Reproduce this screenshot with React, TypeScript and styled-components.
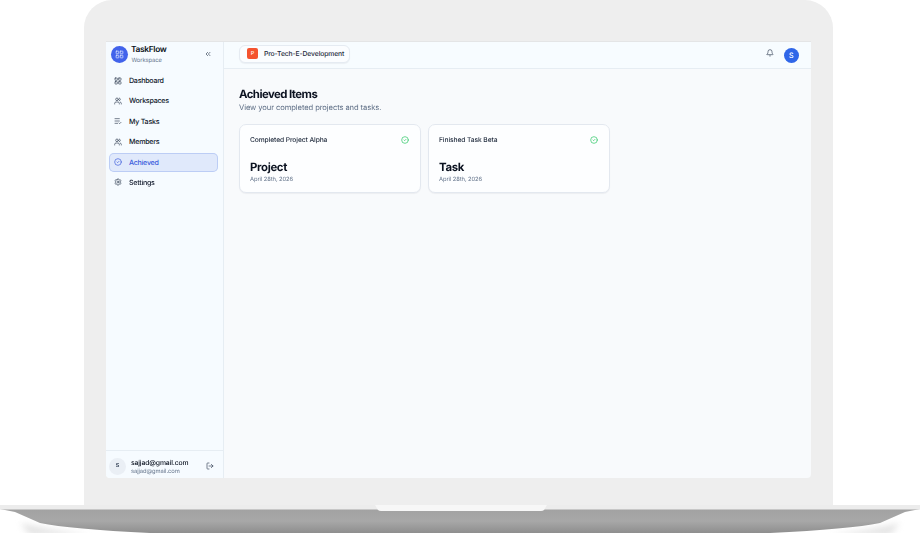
import React from "react";
import styled, { createGlobalStyle } from "styled-components";
import {
  Bell,
  ChevronsLeft,
  CircleCheck,
  LayoutGrid,
  ListCheck,
  LogOut,
  Settings,
  Users,
} from "lucide-react";

const GlobalStyle = createGlobalStyle`
  html, body {
    margin: 0;
    background: #fff;
    font-family: Inter, "Liberation Sans", sans-serif;
    color: #0b1220;
    text-rendering: geometricPrecision;
  }
  * { box-sizing: border-box; }
`;

const Page = styled.div`
  width: 920px;
  height: 533px;
  overflow: hidden;
  display: flex;
  flex-direction: column;
`;

const Lid = styled.div`
  width: 749px;
  height: 505px;
  flex: none;
  margin-left: 84px;
  padding: 41px 22px 27px;
  background: #eeeeee;
  border-radius: 28px 28px 0 0;
`;

const Screen = styled.div`
  height: 437px;
  display: grid;
  grid-template-columns: 118px 1fr;
  background: #f8fafc;
  border-top: 1px solid #e4e5e6;
  border-radius: 0 0 4px 4px;
  overflow: hidden;
  filter: blur(0.2px);
`;

const Sidebar = styled.aside`
  display: flex;
  flex-direction: column;
  background: #f6fbff;
  border-right: 1px solid #e6edf3;
`;

const Brand = styled.div`
  height: 27px;
  flex: none;
  display: flex;
  align-items: center;
  gap: 3.5px;
  padding: 0 11px 3px 4.5px;
`;

const BrandLogo = styled.div`
  width: 17px;
  height: 17px;
  flex: none;
  border-radius: 50%;
  background: #4263eb;
  color: #dbe4ff;
  display: flex;
  align-items: center;
  justify-content: center;
`;

const BrandText = styled.div`
  flex: 1;
  display: flex;
  flex-direction: column;
  gap: 2px;
`;

const BrandName = styled.div`
  font-size: 8.4px;
  line-height: 10px;
  font-weight: 600;
  letter-spacing: -0.33px;
`;

const BrandSub = styled.div`
  font-size: 5.8px;
  line-height: 7px;
  padding-left: 0.5px;
  letter-spacing: -0.08px;
  color: #64748b;
`;

const Nav = styled.nav`
  flex: 1;
  display: flex;
  flex-direction: column;
  gap: 1.4px;
  padding: 2px 5px 0 3px;
`;

const NavItem = styled.div<{ $active?: boolean }>`
  height: 19px;
  display: flex;
  align-items: center;
  gap: 7px;
  padding-left: 5px;
  font-size: 7.1px;
  font-weight: 500;
  letter-spacing: -0.25px;
  border-radius: 5px;
  color: ${(p) => (p.$active ? "#3b5bdb" : "#0f172a")};
  background: ${(p) => (p.$active ? "#e0e9fb" : "transparent")};
  box-shadow: ${(p) => (p.$active ? "inset 0 0 0 1px #bccdf5" : "none")};
`;

const Footer = styled.div`
  height: 28px;
  flex: none;
  display: flex;
  align-items: center;
  gap: 5px;
  padding: 3px 9px 0 3px;
  border-top: 1px solid #e6edf3;
`;

const FooterAvatar = styled.div`
  width: 17px;
  height: 17px;
  flex: none;
  border-radius: 50%;
  background: #eaeff5;
  display: flex;
  align-items: center;
  justify-content: center;
  font-size: 5.5px;
  font-weight: 600;
  color: #334155;
`;

const FooterText = styled.div`
  flex: 1;
  margin-top: 2px;
  display: flex;
  flex-direction: column;
  gap: 1px;
`;

const FooterName = styled.div`
  font-size: 6.8px;
  line-height: 8px;
  font-weight: 500;
  letter-spacing: -0.12px;
`;

const FooterMail = styled.div`
  font-size: 5.8px;
  line-height: 7px;
  letter-spacing: -0.07px;
  color: #64748b;
`;

const Main = styled.main`
  display: flex;
  flex-direction: column;
  min-width: 0;
`;

const Header = styled.header`
  height: 27px;
  flex: none;
  display: flex;
  align-items: center;
  justify-content: space-between;
  padding: 0 12px 3px 15px;
  background: #f7fcff;
  border-bottom: 1px solid #e6edf3;
`;

const ProjectChip = styled.div`
  width: 111px;
  height: 18px;
  display: flex;
  align-items: center;
  gap: 6px;
  padding-left: 7px;
  white-space: nowrap;
  font-size: 6.8px;
  font-weight: 500;
  letter-spacing: -0.12px;
  color: #1e293b;
  background: #fbfdff;
  border: 1px solid #e5ebf2;
  border-radius: 6px;
  box-shadow: 0 1px 1px rgba(15, 23, 42, 0.05);
`;

const ProjectMark = styled.div`
  width: 11px;
  height: 11px;
  flex: none;
  border-radius: 2px;
  background: #f4532f;
  color: #ffe3dc;
  display: flex;
  align-items: center;
  justify-content: center;
  font-size: 5.5px;
  font-weight: 600;
`;

const HeaderActions = styled.div`
  display: flex;
  align-items: center;
  gap: 10px;
  color: #334155;
`;

const BellSlot = styled.div`
  display: flex;
  margin-bottom: 1px;
`;

const UserAvatar = styled.div`
  width: 15px;
  height: 15px;
  margin-top: 4px;
  border-radius: 50%;
  background: #2f66e8;
  color: #fff;
  display: flex;
  align-items: center;
  justify-content: center;
  font-size: 7.5px;
  font-weight: 500;
`;

const Content = styled.div`
  padding: 18px 15px;
`;

const Title = styled.h1`
  margin: 0;
  font-size: 11.4px;
  line-height: 14px;
  font-weight: 700;
  letter-spacing: -0.55px;
`;

const Subtitle = styled.p`
  margin: 1px 0 0;
  font-size: 7.6px;
  line-height: 11px;
  letter-spacing: -0.09px;
  color: #5f6f86;
`;

const Cards = styled.div`
  margin-top: 11px;
  display: grid;
  grid-template-columns: repeat(2, 182px);
  gap: 7px;
`;

const Card = styled.div`
  height: 69px;
  padding: 10px 11px 10px 10px;
  background: #fdfeff;
  border: 1px solid #e3e8ef;
  border-radius: 7px;
  box-shadow: 0 1px 1px rgba(15, 23, 42, 0.05);
`;

const CardTop = styled.div`
  display: flex;
  align-items: center;
  justify-content: space-between;
  color: #22c55e;
`;

const CardLabel = styled.div`
  font-size: 6.7px;
  line-height: 10px;
  font-weight: 500;
  letter-spacing: -0.09px;
  color: #1e293b;
`;

const CardKind = styled.div`
  margin-top: 15px;
  font-size: 11.4px;
  line-height: 15px;
  font-weight: 700;
  letter-spacing: -0.35px;
`;

const CardDate = styled.div`
  margin-top: 1px;
  font-size: 5.8px;
  line-height: 7px;
  letter-spacing: -0.08px;
  color: #64748b;
`;

const Base = styled.svg`
  display: block;
  flex: none;
`;

const BaseShadow = styled.path`
  fill: #e4e4e4;
  filter: blur(3px);
`;

const navItems = [
  { label: "Dashboard", icon: LayoutGrid },
  { label: "Workspaces", icon: Users },
  { label: "My Tasks", icon: ListCheck },
  { label: "Members", icon: Users },
  { label: "Achieved", icon: CircleCheck, active: true },
  { label: "Settings", icon: Settings },
];

const achieved = [
  { label: "Completed Project Alpha", kind: "Project" },
  { label: "Finished Task Beta", kind: "Task" },
];

const LaptopBase = () => (
  <Base width="920" height="28" viewBox="0 0 920 28">
    <defs>
      <linearGradient id="deck" x1="0" y1="0" x2="0" y2="1">
        <stop offset="0" stopColor="#a2a2a2" />
        <stop offset="0.5" stopColor="#a8a8a8" />
        <stop offset="1" stopColor="#8e8e8e" />
      </linearGradient>
    </defs>
    <BaseShadow d="M20 18 L50 24 L90 30 H30 Z M900 18 L870 24 L830 30 H890 Z" />
    <path
      d="M0 4 L15 7 L40 18 Q70 24 150 28 H770 Q850 24 880 18 L905 7 L920 4 Z"
      fill="url(#deck)"
    />
    <rect x="0" y="0" width="920" height="4.5" fill="#ececec" />
    <path d="M375 0 H547 L544 5 Q543 6 541 6 H381 Q379 6 378 5 Z" fill="#f7f7f7" />
  </Base>
);

export default function App() {
  return (
    <Page>
      <GlobalStyle />
      <Lid>
        <Screen>
          <Sidebar>
            <Brand>
              <BrandLogo>
                <LayoutGrid size={9} />
              </BrandLogo>
              <BrandText>
                <BrandName>TaskFlow</BrandName>
                <BrandSub>Workspace</BrandSub>
              </BrandText>
              <ChevronsLeft size={8} color="#334155" />
            </Brand>
            <Nav>
              {navItems.map(({ label, icon: Icon, active }) => (
                <NavItem key={label} $active={active}>
                  <Icon size={8} strokeWidth={2} color={active ? "#3b5bdb" : "#334155"} />
                  {label}
                </NavItem>
              ))}
            </Nav>
            <Footer>
              <FooterAvatar>S</FooterAvatar>
              <FooterText>
                <FooterName>sajjad@gmail.com</FooterName>
                <FooterMail>sajjad@gmail.com</FooterMail>
              </FooterText>
              <LogOut size={8} color="#334155" />
            </Footer>
          </Sidebar>
          <Main>
            <Header>
              <ProjectChip>
                <ProjectMark>P</ProjectMark>
                Pro-Tech-E-Development
              </ProjectChip>
              <HeaderActions>
                <BellSlot>
                  <Bell size={8} />
                </BellSlot>
                <UserAvatar>S</UserAvatar>
              </HeaderActions>
            </Header>
            <Content>
              <Title>Achieved Items</Title>
              <Subtitle>View your completed projects and tasks.</Subtitle>
              <Cards>
                {achieved.map((item) => (
                  <Card key={item.kind}>
                    <CardTop>
                      <CardLabel>{item.label}</CardLabel>
                      <CircleCheck size={8} />
                    </CardTop>
                    <CardKind>{item.kind}</CardKind>
                    <CardDate>April 28th, 2026</CardDate>
                  </Card>
                ))}
              </Cards>
            </Content>
          </Main>
        </Screen>
      </Lid>
      <LaptopBase />
    </Page>
  );
}
